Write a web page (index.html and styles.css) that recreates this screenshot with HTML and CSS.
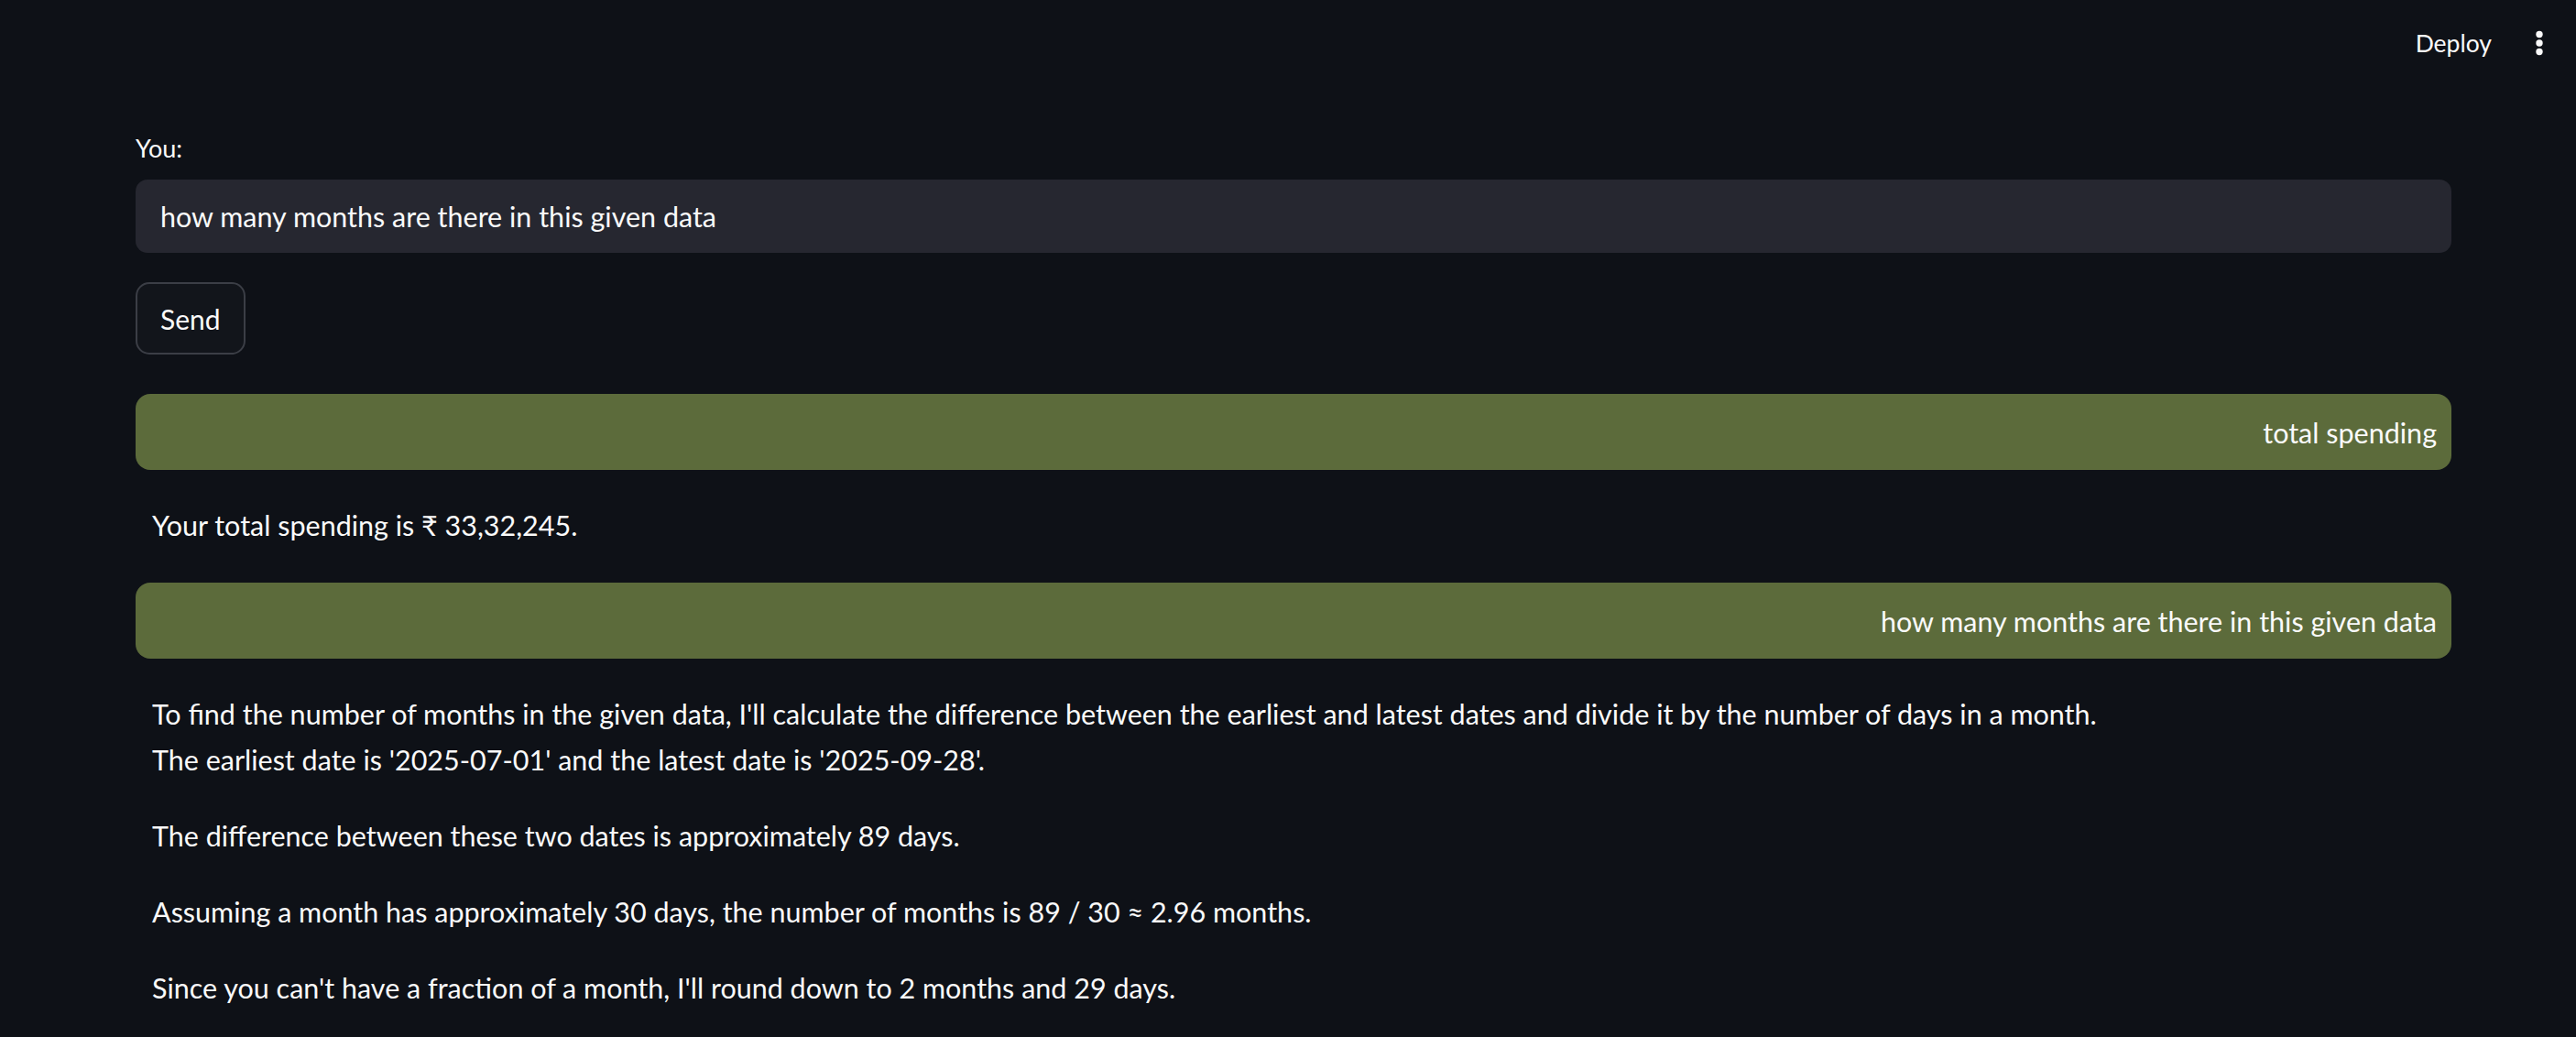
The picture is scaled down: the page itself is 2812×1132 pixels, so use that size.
FILE: index.html
```html
<!DOCTYPE html>
<html lang="en">
<head>
<meta charset="utf-8">
<title>Chat</title>
<link rel="stylesheet" href="styles.css">
</head>
<body>
<header class="topbar">
  <span class="deploy">Deploy</span>
  <svg class="kebab" width="8" height="28" viewBox="0 0 8 28" aria-hidden="true">
    <circle cx="4" cy="4.5" r="3.7" fill="#fafafa"/>
    <circle cx="4" cy="14" r="3.7" fill="#fafafa"/>
    <circle cx="4" cy="23.5" r="3.7" fill="#fafafa"/>
  </svg>
</header>
<main class="main">
  <label class="label" for="q">You:</label>
  <input id="q" class="field" type="text" value="how many months are there in this given data">
  <button class="send" type="button">Send</button>

  <div class="user">total spending</div>
  <div class="bot">
    <p>Your total spending is ₹ 33,32,245.</p>
  </div>

  <div class="user">how many months are there in this given data</div>
  <div class="bot">
    <p>To find the number of months in the given data, I'll calculate the difference between the earliest and latest dates and divide it by the number of days in a month.<br>The earliest date is '2025-07-01' and the latest date is '2025-09-28'.</p>
    <p>The difference between these two dates is approximately 89 days.</p>
    <p>Assuming a month has approximately 30 days, the number of months is 89 / 30 ≈ 2.96 months.</p>
    <p>Since you can't have a fraction of a month, I'll round down to 2 months and 29 days.</p>
  </div>
</main>
</body>
</html>
```
FILE: styles.css
```css
html, body {
  margin: 0;
  padding: 0;
  background: #0e1117;
  color: #fafafa;
  font-family: Lato, "Noto Sans", sans-serif;
  overflow: hidden;
}

.topbar {
  height: 94px;
  display: flex;
  justify-content: flex-end;
  align-items: center;
  padding-right: 36px;
}

.deploy {
  font-size: 26.5px;
  line-height: 1;
  margin-right: 48px;
  color: #fafafa;
}

.kebab {
  display: block;
}

.main {
  margin-left: 148px;
  width: 2528px;
  display: flex;
  flex-direction: column;
  padding-top: 50px;
}

.label {
  font-size: 27px;
  line-height: 36px;
  height: 36px;
  margin-bottom: 16px;
}

.field {
  box-sizing: border-box;
  height: 80px;
  width: 100%;
  border: none;
  outline: none;
  border-radius: 13px;
  background: #262730;
  color: #fafafa;
  font-family: Lato, "Noto Sans", sans-serif;
  font-size: 30.5px;
  padding: 0 27px;
  margin: 0;
}

.send {
  box-sizing: border-box;
  align-self: flex-start;
  margin-top: 32px;
  width: 120px;
  height: 79px;
  border: 2px solid #3b3e46;
  border-radius: 15px;
  background: #12151b;
  color: #fafafa;
  font-family: Lato, "Noto Sans", sans-serif;
  font-size: 30px;
  padding: 0 0 0 25px;
  text-align: left;
  margin-bottom: 43px;
}

.user {
  box-sizing: border-box;
  height: 83px;
  display: flex;
  align-items: center;
  justify-content: flex-end;
  background: #5c6b3b;
  border-radius: 16px;
  padding: 0 16px;
  font-size: 30.5px;
  color: #fafafa;
}

.bot {
  padding: 35px 18px 38px;
  font-size: 30.5px;
  line-height: 50px;
}

.bot p {
  margin: 0 0 33px;
}

.bot p:last-child {
  margin-bottom: 0;
}
```
